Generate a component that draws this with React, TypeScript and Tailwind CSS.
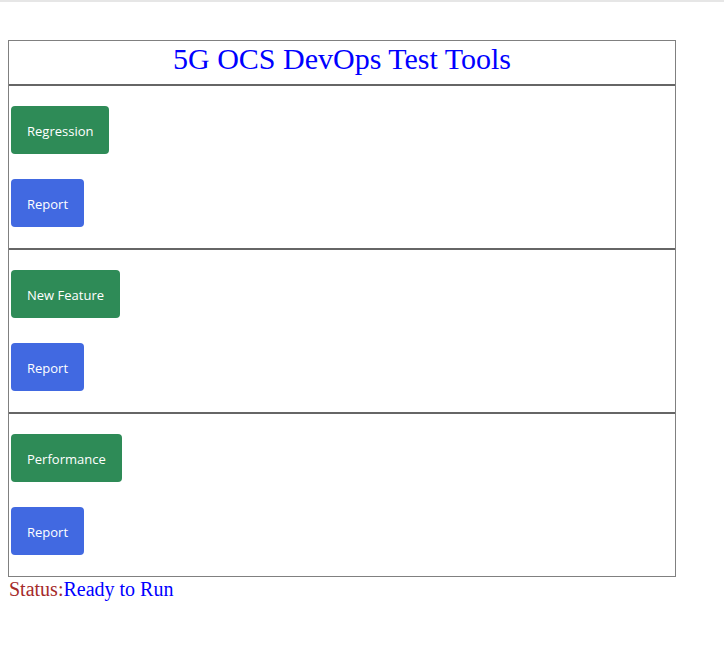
import React from 'react';

const sections = ['Regression', 'New Feature', 'Performance'];

const ActionButton: React.FC<{ label: string; color: string }> = ({ label, color }) => (
  <button
    className={`h-12 px-4 pt-[3px] rounded text-white text-[13px] ${color}`}
    style={{ fontFamily: '"Open Sans", sans-serif' }}
  >
    {label}
  </button>
);

export default function App() {
  return (
    <div className="min-h-[656px] bg-white">
      <div className="h-[2px] bg-[#e6e6e6]" />
      <div className="px-2 pt-[38px]">
        <div className="w-[668px] border border-[#808080]">
          <div className="h-[45px] pb-[8px] flex items-center justify-center border-b-2 border-[#666666]">
            <h1
              className="text-[30px] leading-none text-[#0000ff]"
              style={{ fontFamily: '"Liberation Serif", serif' }}
            >
              5G OCS DevOps Test Tools
            </h1>
          </div>
          {sections.map((name, i) => (
            <div
              key={name}
              className={`flex flex-col items-start gap-[25px] pt-5 pl-[2px] ${
                i < sections.length - 1 ? 'h-[164px] border-b-2 border-[#666666]' : 'h-[162px]'
              }`}
            >
              <ActionButton label={name} color="bg-[#2e8b57]" />
              <ActionButton label="Report" color="bg-[#4169e1]" />
            </div>
          ))}
        </div>
        <p className="text-[20px] leading-6 pl-px" style={{ fontFamily: '"Liberation Serif", serif' }}>
          <span className="text-[#a52a2a]">Status:</span>
          <span className="text-[#0000ff]">Ready to Run</span>
        </p>
      </div>
    </div>
  );
}
